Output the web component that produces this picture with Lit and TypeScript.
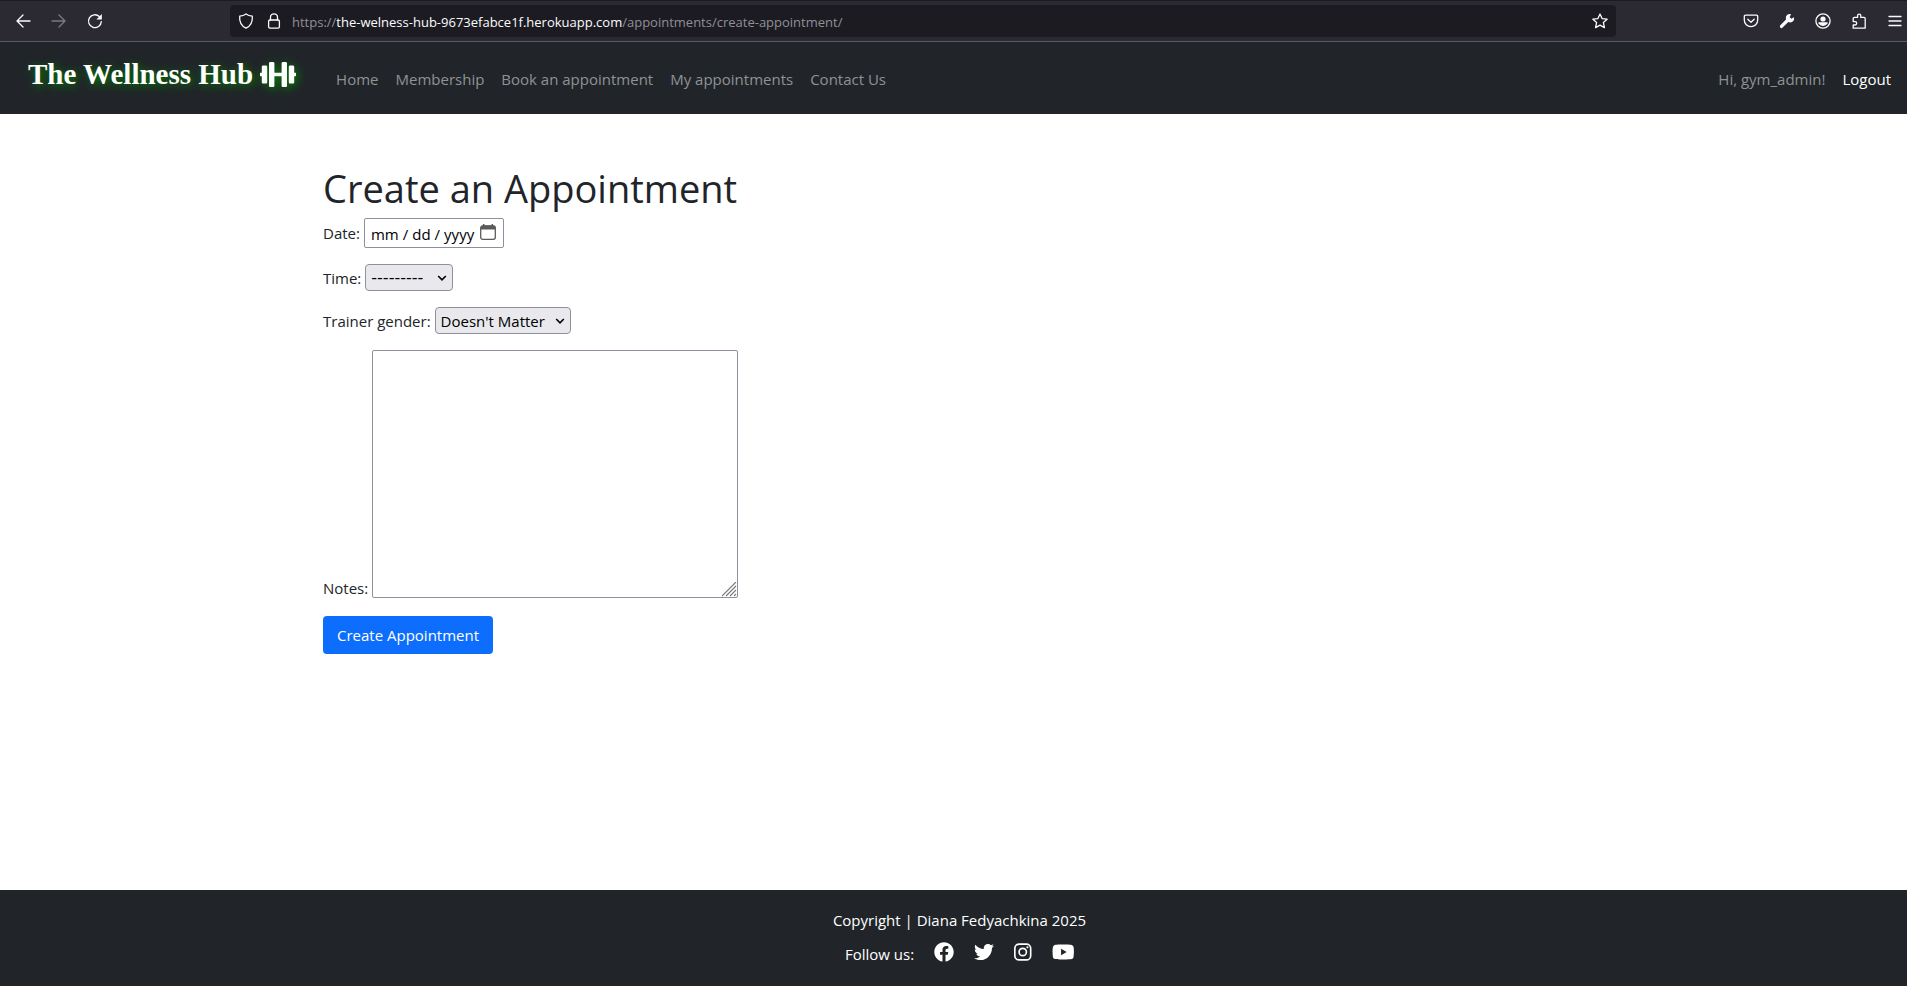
import { LitElement, html, css, svg } from "lit";
import { customElement } from "lit/decorators.js";

const glyphs = {
  back: svg`<path d="M15 8H2M8 2L2 8l6 6" />`,
  forward: svg`<path d="M1 8h13M8 2l6 6-6 6" />`,
  reload: svg`<path d="M14.3 8.6A6.4 6.4 0 1 1 12.3 3.5" /><path d="M14.8 1v5.4H9.4z" fill="currentColor" stroke="none" />`,
  shield: svg`<path d="M8 .9c1.6 1.2 4 2 6.3 2.2C14.8 8.5 12.5 13 8 15.2 3.5 13 1.2 8.5 1.7 3.1 4 2.9 6.4 2.1 8 .9z" />`,
  lock: svg`<rect x="2.6" y="7" width="10.8" height="8.2" rx="1.4" /><path d="M4.5 7V4.3a3.5 3.5 0 0 1 7 0V7" />`,
  star: svg`<path d="M8 1l2.1 4.6 5 .6-3.7 3.4 1 5L8 12.1l-4.4 2.5 1-5L.9 6.2l5-.6z" />`,
  pocket: svg`<path d="M2.5 2.2h11a1.2 1.2 0 0 1 1.2 1.2V7a6.7 6.7 0 0 1-13.4 0V3.4a1.2 1.2 0 0 1 1.2-1.2z" /><path d="M4.8 6.2L8 9.2l3.2-3" />`,
  wrench: svg`<path d="M14.9 4.2l-2.6 1.5-1.7-1.6 1.5-2.8A4 4 0 0 0 7 6.6L1.3 12.3a1.6 1.6 0 0 0 2.3 2.3L9.3 9a4 4 0 0 0 5.6-4.8z" fill="currentColor" stroke="none" />`,
  account: svg`<circle cx="8" cy="8" r="7.1" /><circle cx="8" cy="6" r="2.6" fill="currentColor" stroke="none" /><path d="M3.8 10h8.4a5 5 0 0 1-8.4 0z" fill="currentColor" />`,
  extension: svg`<path d="M2.2 8V5.6A1.2 1.2 0 0 1 3.4 4.4H6.6V2.7a1.6 1.6 0 0 1 3.2 0V4.4H13a1.2 1.2 0 0 1 1.2 1.2V15.2H2.2V12H4a1.7 1.7 0 0 0 0-3.4H2.2z" />`,
  menu: svg`<path d="M2 3.5h12M2 8h12M2 12.5h12" />`,
};

const icon = (name: keyof typeof glyphs) => html`
  <svg class="icon" viewBox="0 0 16 16" aria-hidden="true">${glyphs[name]}</svg>
`;

@customElement("browser-bar")
export class BrowserBar extends LitElement {
  static styles = css`
    :host {
      display: flex;
      align-items: center;
      height: 42px;
      box-sizing: border-box;
      padding-left: 5px;
      background: #2b2a33;
      border-top: 1px solid #1c1b22;
      border-bottom: 1px solid #5b5a66;
      color: #fbfbfe;
      font-family: "Open Sans", "Noto Sans", sans-serif;
    }
    .tools {
      display: flex;
    }
    .tool {
      display: flex;
      align-items: center;
      justify-content: center;
      width: 36px;
      height: 32px;
      padding: 0;
      border: 0;
      background: none;
      color: inherit;
    }
    .tool:disabled {
      color: #7b7a82;
    }
    .edge {
      width: 30px;
      padding-left: 6px;
    }
    .icon {
      width: 16px;
      height: 16px;
      fill: none;
      stroke: currentColor;
      stroke-width: 1.3;
      stroke-linecap: round;
      stroke-linejoin: round;
    }
    .address {
      flex: 1;
      display: flex;
      align-items: center;
      gap: 12px;
      height: 32px;
      box-sizing: border-box;
      margin: 0 117px;
      padding: 0 8px;
      border-radius: 4px;
      background: #1c1b22;
    }
    .url {
      flex: 1;
      margin-left: -2px;
      padding-top: 2px;
      font-size: 13px;
      line-height: 20px;
      color: #8f8f98;
      white-space: nowrap;
    }
    .host {
      color: #fbfbfe;
    }
  `;

  render() {
    return html`
      <div class="tools">
        <button class="tool" aria-label="Back">${icon("back")}</button>
        <button class="tool" aria-label="Forward" disabled>${icon("forward")}</button>
        <button class="tool" aria-label="Reload">${icon("reload")}</button>
      </div>
      <div class="address">
        ${icon("shield")} ${icon("lock")}
        <span class="url"
          >https://<span class="host">the-welness-hub-9673efabce1f.herokuapp.com</span
          >/appointments/create-appointment/</span
        >
        ${icon("star")}
      </div>
      <div class="tools">
        <button class="tool" aria-label="Save to Pocket">${icon("pocket")}</button>
        <button class="tool" aria-label="Developer tools">${icon("wrench")}</button>
        <button class="tool" aria-label="Account">${icon("account")}</button>
        <button class="tool" aria-label="Extensions">${icon("extension")}</button>
        <button class="tool edge" aria-label="Menu">${icon("menu")}</button>
      </div>
    `;
  }
}

@customElement("site-nav")
export class SiteNav extends LitElement {
  static styles = css`
    :host {
      display: flex;
      align-items: center;
      height: 72px;
      box-sizing: border-box;
      padding: 0 16px 0 28px;
      background: #212529;
    }
    .brand {
      display: flex;
      align-items: center;
      gap: 7px;
      padding-bottom: 8px;
      margin-right: 40px;
      color: #fff;
      font-family: "Liberation Serif", serif;
      font-size: 29px;
      font-weight: 700;
      line-height: 36px;
      text-decoration: none;
      text-shadow: 2px 2px 8px #008000;
    }
    .dumbbell {
      width: 36px;
      height: 29px;
      fill: currentColor;
      filter: drop-shadow(2px 2px 4px #008000);
    }
    .links {
      display: flex;
      gap: 17px;
      margin: 0;
      padding: 2px 0 0;
      list-style: none;
      font-size: 15px;
      line-height: 24px;
    }
    .account {
      margin-left: auto;
    }
    .link {
      color: #909294;
      text-decoration: none;
    }
    .strong {
      color: #fff;
    }
  `;

  render() {
    const pages = ["Home", "Membership", "Book an appointment", "My appointments", "Contact Us"];
    return html`
      <a class="brand" href="#">
        The Wellness Hub
        <svg class="dumbbell" viewBox="0 0 640 512" aria-hidden="true">
          <path
            d="M104 96H56c-13.3 0-24 10.7-24 24v104H8c-4.4 0-8 3.6-8 8v48c0 4.4 3.6 8 8 8h24v104c0 13.3 10.7 24 24 24h48c13.3 0 24-10.7 24-24V120c0-13.3-10.7-24-24-24zm528 128h-24V120c0-13.3-10.7-24-24-24h-48c-13.3 0-24 10.7-24 24v272c0 13.3 10.7 24 24 24h48c13.3 0 24-10.7 24-24V288h24c4.4 0 8-3.6 8-8v-48c0-4.4-3.6-8-8-8zM456 32h-48c-13.3 0-24 10.7-24 24v168H256V56c0-13.3-10.7-24-24-24h-48c-13.3 0-24 10.7-24 24v400c0 13.3 10.7 24 24 24h48c13.3 0 24-10.7 24-24V288h128v168c0 13.3 10.7 24 24 24h48c13.3 0 24-10.7 24-24V56c0-13.3-10.7-24-24-24z"
          />
        </svg>
      </a>
      <ul class="links">
        ${pages.map((page) => html`<li><a class="link" href="#">${page}</a></li>`)}
      </ul>
      <ul class="links account">
        <li class="link">Hi, gym_admin!</li>
        <li><a class="link strong" href="#">Logout</a></li>
      </ul>
    `;
  }
}

@customElement("appointment-form")
export class AppointmentForm extends LitElement {
  static styles = css`
    :host {
      display: block;
    }
    .title {
      margin: 0 0 6px;
      font-size: 38px;
      font-weight: 400;
      line-height: 48px;
    }
    .form {
      display: flex;
      flex-direction: column;
      align-items: flex-start;
      gap: 16px;
    }
    .row {
      display: flex;
      align-items: center;
      gap: 4px;
    }
    .row.tall {
      align-items: flex-end;
      line-height: 20px;
    }
    .field {
      box-sizing: border-box;
      border: 1px solid #8f8f9d;
      background-color: #fff;
      color: #000;
      font-family: inherit;
      font-size: 15px;
    }
    .date {
      width: 140px;
      height: 30px;
      padding: 2px 7px 0 5px;
      border-radius: 2px;
    }
    .date::-webkit-datetime-edit-text {
      padding: 0 3px;
    }
    .date::-webkit-calendar-picker-indicator {
      width: 16px;
      height: 16px;
      padding: 0;
      margin: 0 0 4px;
      opacity: 1;
      background: url("data:image/svg+xml,%3Csvg xmlns='http://www.w3.org/2000/svg' viewBox='0 0 16 16'%3E%3Crect x='.7' y='2' width='14.6' height='13.3' rx='2' fill='none' stroke='%235b5b5b' stroke-width='1.3'/%3E%3Cpath d='M.7 5.5V3a1.5 1.5 0 0 1 1.5-1.5H3V0h1.5v1.5h7V0H13v1.5h.8A1.5 1.5 0 0 1 15.3 3v2.5z' fill='%235b5b5b'/%3E%3C/svg%3E")
        center / 16px 16px no-repeat;
    }
    .choice {
      appearance: none;
      height: 27px;
      padding: 0 22px 0 5px;
      border-radius: 4px;
      background: #e9e9ed
        url("data:image/svg+xml,%3Csvg xmlns='http://www.w3.org/2000/svg' viewBox='0 0 10 6'%3E%3Cpath d='M1.2 1L5 4.8 8.8 1' fill='none' stroke='%23000' stroke-width='1.6'/%3E%3C/svg%3E")
        right 5px center / 10px 6px no-repeat;
    }
    .time {
      width: 88px;
      font-family: "DejaVu Sans", sans-serif;
      font-size: 16px;
    }
    .gender {
      width: 136px;
    }
    .notes {
      width: 366px;
      height: 248px;
      padding: 2px;
      border-radius: 2px;
      resize: both;
    }
    .notes::-webkit-resizer {
      background: url("data:image/svg+xml,%3Csvg xmlns='http://www.w3.org/2000/svg' viewBox='0 0 15 15'%3E%3Cpath d='M0 14L14 0M4 14L14 4M8 14l6-6M12 14l2-2' stroke='%23777' stroke-width='1.1'/%3E%3C/svg%3E")
        center / 15px 15px no-repeat;
    }
    .submit {
      height: 38px;
      margin-top: 2px;
      padding: 0 14px;
      border: 0;
      border-radius: 4px;
      background: #0d6efd;
      color: #fff;
      font-family: inherit;
      font-size: 15px;
      line-height: 24px;
    }
  `;

  render() {
    return html`
      <h1 class="title">Create an Appointment</h1>
      <form class="form">
        <div class="row">
          <label for="date">Date:</label>
          <input class="field date" id="date" type="date" />
        </div>
        <div class="row">
          <label for="time">Time:</label>
          <select class="field choice time" id="time">
            <option>---------</option>
          </select>
        </div>
        <div class="row">
          <label for="gender">Trainer gender:</label>
          <select class="field choice gender" id="gender">
            <option>Doesn't Matter</option>
          </select>
        </div>
        <div class="row tall">
          <label for="notes">Notes:</label>
          <textarea class="field notes" id="notes"></textarea>
        </div>
        <button class="submit" type="button">Create Appointment</button>
      </form>
    `;
  }
}

@customElement("site-footer")
export class SiteFooter extends LitElement {
  static styles = css`
    :host {
      display: flex;
      flex-direction: column;
      align-items: center;
      gap: 10px;
      padding: 18px 0 20px 12px;
      background: #212529;
      color: #fff;
    }
    .copyright {
      margin: 0;
    }
    .follow {
      display: flex;
      align-items: center;
      gap: 20px;
    }
    .social {
      display: flex;
      padding-bottom: 4px;
      color: #fff;
    }
    .logo {
      height: 20px;
      fill: currentColor;
    }
    .outline {
      fill: none;
      stroke: currentColor;
      stroke-width: 42;
    }
  `;

  render() {
    return html`
      <p class="copyright">Copyright | Diana Fedyachkina 2025</p>
      <div class="follow">
        <span>Follow us:</span>
        <a class="social" href="#" aria-label="Facebook">
          <svg class="logo" viewBox="0 0 512 512">
            <path
              d="M504 256C504 119 393 8 256 8S8 119 8 256c0 123.78 90.69 226.38 209.25 245V327.69h-63V256h63v-54.64c0-62.15 37-96.48 93.67-96.48 27.14 0 55.52 4.84 55.52 4.84v61h-31.28c-30.8 0-40.41 19.12-40.41 38.73V256h68.78l-11 71.69h-57.78V501C413.31 482.38 504 379.78 504 256z"
            />
          </svg>
        </a>
        <a class="social" href="#" aria-label="Twitter">
          <svg class="logo" viewBox="0 0 512 512">
            <path
              d="M459.37 151.716c.325 4.548.325 9.097.325 13.645 0 138.72-105.583 298.558-298.558 298.558-59.452 0-114.68-17.219-161.137-47.106 8.447.974 16.568 1.299 25.34 1.299 49.055 0 94.213-16.568 130.274-44.832-46.132-.975-84.792-31.188-98.112-72.772 6.498.974 12.995 1.624 19.818 1.624 9.421 0 18.843-1.3 27.614-3.573-48.081-9.747-84.143-51.98-84.143-102.985v-1.299c13.969 7.797 30.214 12.67 47.431 13.319-28.264-18.843-46.781-51.005-46.781-87.391 0-19.492 5.197-37.36 14.294-52.954 51.655 63.675 129.3 105.258 216.365 109.807-1.624-7.797-2.599-15.918-2.599-24.04 0-57.828 46.782-104.934 104.934-104.934 30.213 0 57.502 12.67 76.67 33.137 23.715-4.548 46.456-13.32 66.599-25.34-7.798 24.366-24.366 44.833-46.132 57.827 21.117-2.273 41.584-8.122 60.426-16.243-14.292 20.791-32.161 39.308-52.628 54.253z"
            />
          </svg>
        </a>
        <a class="social" href="#" aria-label="Instagram">
          <svg class="logo" viewBox="0 0 448 512">
            <rect class="outline" x="21" y="53" width="406" height="406" rx="110" />
            <circle class="outline" cx="224" cy="256" r="94" />
            <circle cx="344" cy="136" r="27" />
          </svg>
        </a>
        <a class="social" href="#" aria-label="YouTube">
          <svg class="logo" viewBox="0 0 576 512">
            <path
              d="M549.655 124.083c-6.281-23.65-24.787-42.276-48.284-48.597C458.781 64 288 64 288 64S117.22 64 74.629 75.486c-23.497 6.322-42.003 24.947-48.284 48.597-11.412 42.867-11.412 132.305-11.412 132.305s0 89.438 11.412 132.305c6.281 23.65 24.787 41.5 48.284 47.821C117.22 448 288 448 288 448s170.78 0 213.371-11.486c23.497-6.321 42.003-24.171 48.284-47.821 11.412-42.867 11.412-132.305 11.412-132.305s0-89.438-11.412-132.305zm-317.51 213.508V175.185l142.739 81.205-142.739 81.201z"
            />
          </svg>
        </a>
      </div>
    `;
  }
}

@customElement("app-root")
export class AppRoot extends LitElement {
  static styles = css`
    :host {
      display: flex;
      flex-direction: column;
      min-height: 100vh;
      background: #fff;
      color: #212529;
      font-family: "Open Sans", "Noto Sans", sans-serif;
      font-size: 15px;
      line-height: 24px;
    }
    .content {
      flex: 1;
      width: 100%;
      max-width: 1261px;
      box-sizing: border-box;
      margin: 0 auto;
      padding: 50px 0 24px;
    }
  `;

  render() {
    return html`
      <browser-bar></browser-bar>
      <site-nav></site-nav>
      <main class="content"><appointment-form></appointment-form></main>
      <site-footer></site-footer>
    `;
  }
}
